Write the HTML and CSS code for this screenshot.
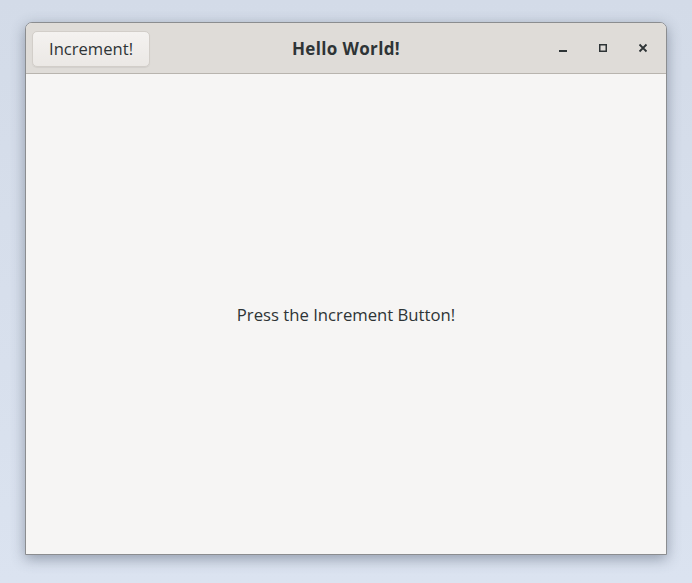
FILE: index.html
```html
<!DOCTYPE html>
<html>
<head>
<meta charset="utf-8">
<link rel="stylesheet" href="styles.css">
</head>
<body>
<div class="desktop">
  <div class="window">
    <div class="headerbar">
      <div class="hb-start"><button class="btn">Increment!</button></div>
      <div class="title">Hello World!</div>
      <div class="hb-end">
        <span class="ctl"><svg width="16" height="16" viewBox="0 0 16 16"><rect x="4" y="10" width="8" height="2" fill="#2e3436"/></svg></span>
        <span class="ctl"><svg width="16" height="16" viewBox="0 0 16 16"><rect x="4.75" y="4.75" width="6.5" height="6.5" fill="none" stroke="#2e3436" stroke-width="1.5"/></svg></span>
        <span class="ctl"><svg width="16" height="16" viewBox="0 0 16 16"><path d="M4.5 4.5 L11.5 11.5 M11.5 4.5 L4.5 11.5" stroke="#2e3436" stroke-width="1.8"/></svg></span>
      </div>
    </div>
    <div class="content">
      <p class="label">Press the Increment Button!</p>
    </div>
  </div>
</div>
</body>
</html>
```
FILE: styles.css
```css
html, body { margin: 0; padding: 0; }
body {
  width: 692px; height: 583px;
  background: linear-gradient(#d3dbe8, #dbe3f0);
  font-family: "Open Sans", "Noto Sans", sans-serif;
  overflow: hidden;
}
.desktop { padding: 22px 25px 0 25px; }
.window {
  width: 640px; height: 531px;
  border: 1px solid #8b8d90;
  border-radius: 7px 7px 0 0;
  background: #f6f5f4;
  display: flex; flex-direction: column;
  box-shadow: 0 4px 14px rgba(60,70,90,0.45);
  overflow: hidden;
}
.headerbar {
  height: 50px;
  background: #dfdcd8;
  border-bottom: 1px solid #b8b4ae;
  display: grid;
  grid-template-columns: 1fr auto 1fr;
  align-items: center;
  padding: 0 6px;
}
.hb-start { display: flex; }
.btn {
  font-family: inherit;
  font-size: 16.6px;
  color: #2e3436;
  height: 36px;
  padding: 0 16px;
  border: 1px solid #d2cec9;
  border-radius: 5px;
  background: linear-gradient(#f4f2f0, #ebe8e5);
  box-shadow: 0 1px 1px rgba(0,0,0,0.06);
  margin-top: 1px;
}
.title {
  font-weight: bold;
  font-size: 17px;
  letter-spacing: 0.35px;
  color: #2e3436;
}
.hb-end { display: flex; justify-content: flex-end; gap: 24px; padding-right: 9px; }
.ctl { display: flex; width: 16px; height: 16px; }
.content {
  flex: 1;
  display: flex;
  align-items: center;
  justify-content: center;
}
.label {
  margin: 0;
  font-size: 16.7px;
  color: #2e3436;
}
```
